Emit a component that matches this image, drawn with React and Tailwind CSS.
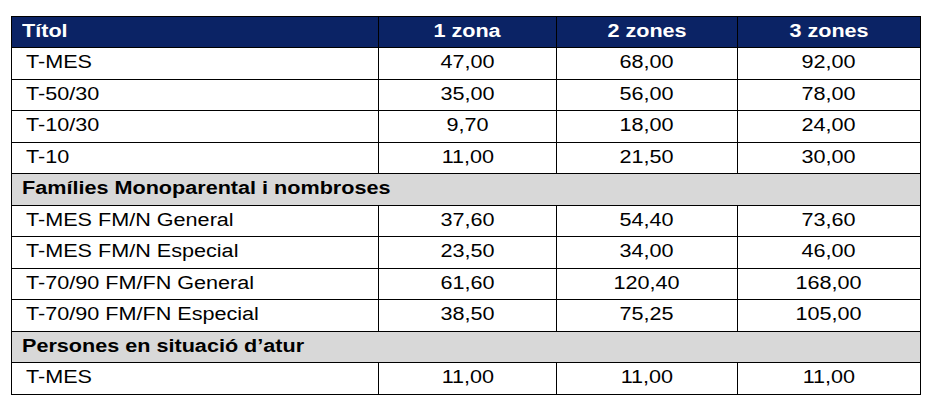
const rows = [
  { name: "T-MES", v: ["47,00", "68,00", "92,00"] },
  { name: "T-50/30", v: ["35,00", "56,00", "78,00"] },
  { name: "T-10/30", v: ["9,70", "18,00", "24,00"] },
  { name: "T-10", v: ["11,00", "21,50", "30,00"] },
  { section: "Famílies Monoparental i nombroses" },
  { name: "T-MES FM/N General", v: ["37,60", "54,40", "73,60"] },
  { name: "T-MES FM/N Especial", v: ["23,50", "34,00", "46,00"] },
  { name: "T-70/90 FM/FN General", v: ["61,60", "120,40", "168,00"] },
  { name: "T-70/90 FM/FN Especial", v: ["38,50", "75,25", "105,00"] },
  { section: "Persones en situació d’atur" },
  { name: "T-MES", v: ["11,00", "11,00", "11,00"] },
];

// the text in the picture is drawn a little wide, so it is stretched sideways
const Txt = ({ children, left }) => (
  <span className={"inline-block scale-x-[1.2] " + (left ? "origin-left" : "origin-center")}>
    {children}
  </span>
);

const App = () => {
  return (
    <div className="w-[931px] h-[404px] bg-white pt-[16px] pl-[11px] font-['Liberation_Sans',Arial,sans-serif] text-[18px] leading-[20px] text-black">
      <table className="w-[909px] border-collapse table-fixed">
        <colgroup>
          <col className="w-[367px]" />
          <col className="w-[178px]" />
          <col className="w-[181px]" />
          <col className="w-[183px]" />
        </colgroup>
        <thead>
          <tr className="h-[31px] bg-[#0b2365] text-white font-bold">
            <th className="border border-black text-left pl-[10px] pb-[3px] align-middle">
              <Txt left>Títol</Txt>
            </th>
            <th className="border border-black text-center pb-[3px] align-middle"><Txt>1 zona</Txt></th>
            <th className="border border-black text-center pb-[3px] align-middle"><Txt>2 zones</Txt></th>
            <th className="border border-black text-center pb-[3px] align-middle"><Txt>3 zones</Txt></th>
          </tr>
        </thead>
        <tbody>
          {rows.map((r, i) =>
            r.section ? (
              <tr key={i} className="h-[31.5px] bg-[#d8d8d8]">
                <td colSpan={4} className="border border-black pl-[10px] pb-[2px] font-bold align-middle">
                  <Txt left>{r.section}</Txt>
                </td>
              </tr>
            ) : (
              <tr key={i} className="h-[31.5px]">
                <td className="border border-black pl-[14px] pb-[2px] align-middle">
                  <Txt left>{r.name}</Txt>
                </td>
                {r.v.map((x, j) => (
                  <td key={j} className="border border-black text-center pb-[2px] align-middle">
                    <Txt>{x}</Txt>
                  </td>
                ))}
              </tr>
            )
          )}
        </tbody>
      </table>
    </div>
  );
};

export default App;
